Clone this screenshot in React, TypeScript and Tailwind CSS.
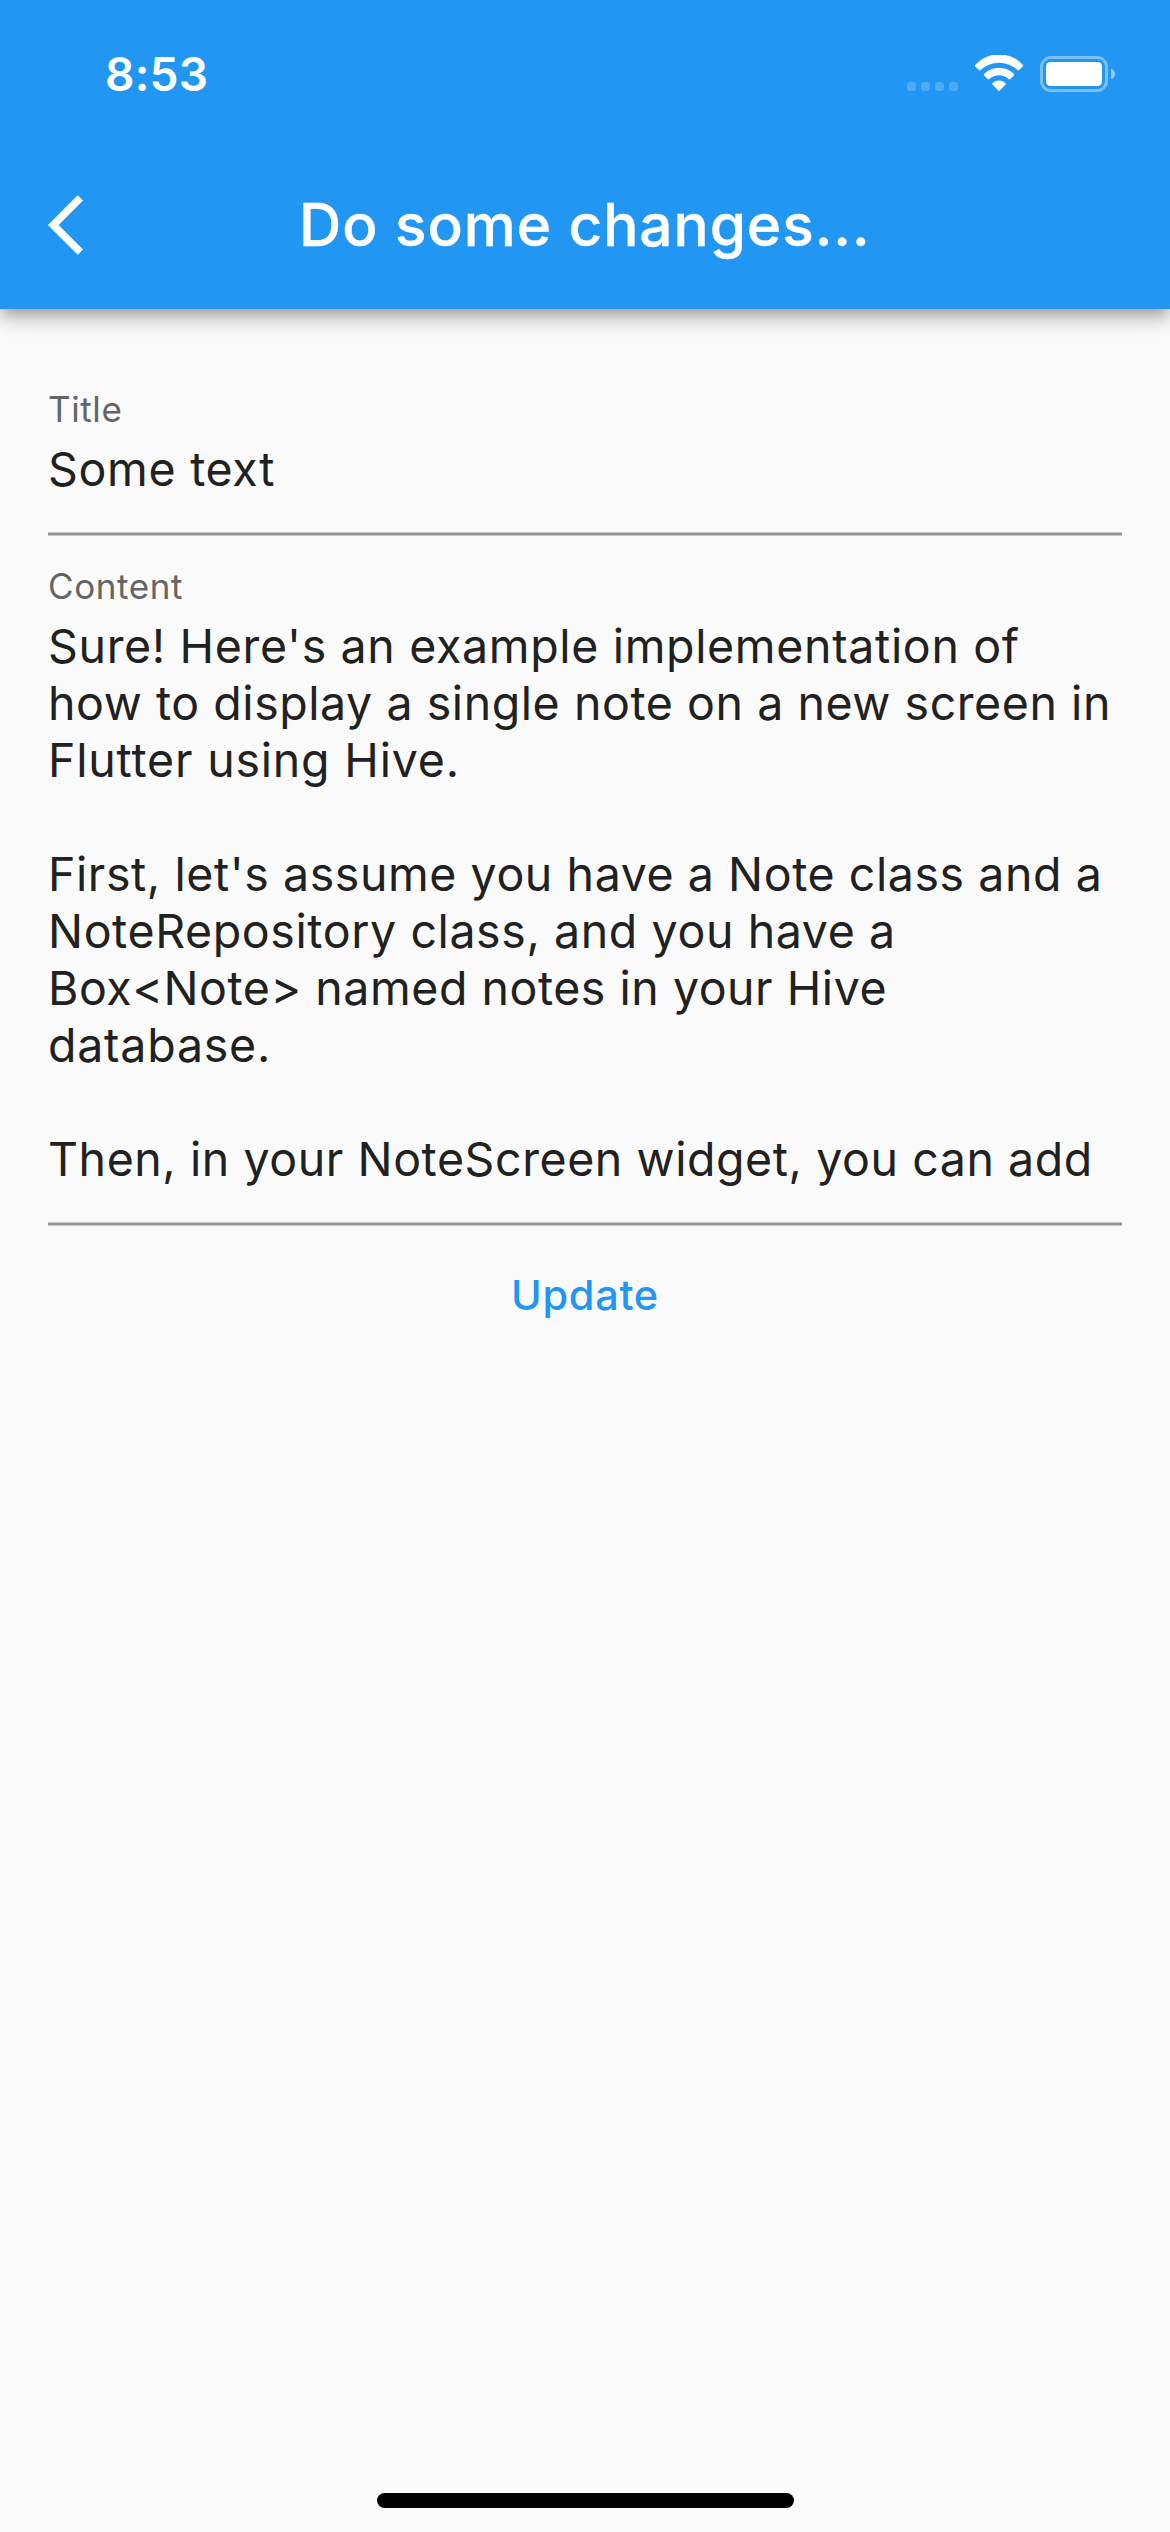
import type { ReactNode } from "react";

function WifiIcon() {
  return (
    <svg className="h-[38px] w-[49px]" viewBox="0 0 49 38" fill="white">
      <path d="M0.300 9.700A32.500 32.500 0 0 1 47.700 9.700Q48.600 10.500 47.800 11.400L44.200 15Q43.500 15.800 42.600 15A27.500 27.500 0 0 0 5.400 15Q4.500 15.800 3.800 15L0.200 11.400Q-0.600 10.500 0.300 9.700Z" />
      <path d="M9.200 18.800A21 21 0 0 1 38.800 18.800Q39.700 19.600 38.900 20.400L35.300 24Q34.500 24.800 33.600 24A14.500 14.500 0 0 0 14.400 24Q13.500 24.800 12.700 24L9.100 20.400Q8.300 19.600 9.200 18.800Z" />
      <path d="M17.600 28A9.500 9.500 0 0 1 30.400 28Q31.300 28.800 30.500 29.600L24.800 35.600Q24 36.500 23.200 35.600L17.500 29.600Q16.700 28.800 17.600 28Z" />
    </svg>
  );
}

function BatteryIcon() {
  return (
    <svg className="h-[38px] w-[76px]" viewBox="0 0 76 38">
      <rect x="1.500" y="2.500" width="65" height="33" rx="9.500" fill="none" stroke="white" strokeOpacity="0.4" strokeWidth="3" />
      <rect x="6" y="7" width="56" height="24" rx="4.500" fill="white" />
      <path d="M71 13.500C73.500 14.500 75 16.500 75 19S73.500 23.500 71 24.500Z" fill="white" fillOpacity="0.5" />
    </svg>
  );
}

function StatusBar() {
  return (
    <div className="flex h-[141px] items-start justify-between pr-[54px] pl-[105px]">
      <span className="mt-[46px] text-[46px] leading-[56px] font-semibold tracking-[0.22px]">8:53</span>
      <div className="mt-[55px] flex">
        <div className="mt-[27px] mr-[17px] flex gap-[5px]">
          {[0, 1, 2, 3].map((i) => (
            <span key={i} className="size-[9px] rounded-[3px] bg-white/20" />
          ))}
        </div>
        <WifiIcon />
        <div className="ml-4">
          <BatteryIcon />
        </div>
      </div>
    </div>
  );
}

function AppBar() {
  return (
    <div className="grid h-[168px] grid-cols-[299px_1fr] items-center">
      <button aria-label="Back" className="pl-12">
        <svg className="h-[60px] w-[36px]" viewBox="0 2 12 20" fill="white">
          <path d="M11.670 3.870L9.900 2.100 0 12l9.900 9.900 1.770-1.770L3.540 12z" />
        </svg>
      </button>
      <h1 className="text-[58.5px] leading-[72px] font-medium tracking-[0.95px] whitespace-nowrap [-webkit-text-stroke:0.4px_white]">
        Do some changes...
      </h1>
    </div>
  );
}

function Field({ label, children }: { label: string; children: ReactNode }) {
  return (
    <div>
      <label className="block text-[35px] leading-[42px] tracking-[0.6px] text-[#656565]">{label}</label>
      <div className="mt-[11px] pb-[34px] text-[46.5px] leading-[57px] whitespace-pre text-[#212121]">{children}</div>
      <div className="h-1 border-y border-[#c6c6c6] bg-[#949494]" />
    </div>
  );
}

const lines: [string, string][] = [
  ["Sure! Here's an example implementation of", "tracking-[0.66px]"],
  ["how to display a single note on a new screen in", "tracking-[0.56px]"],
  ["Flutter using Hive.", "tracking-[0.8px]"],
  ["", ""],
  ["First, let's assume you have a Note class and a", "tracking-[0.57px]"],
  ["NoteRepository class, and you have a", "tracking-[0.6px]"],
  ["Box<Note> named notes in your Hive", "tracking-[0.53px]"],
  ["database.", "tracking-[0.77px]"],
  ["", ""],
  ["Then, in your NoteScreen widget, you can add", "tracking-[0.57px]"],
];

export default function App() {
  return (
    <div className="flex h-[2532px] w-[1170px] flex-col overflow-hidden bg-[#fafafa] font-['Inter',sans-serif]">
      <header className="h-[309px] shrink-0 bg-[#2196f3] text-white shadow-[0_6px_12px_-3px_rgba(0,0,0,0.2),0_12px_15px_0_rgba(0,0,0,0.14),0_3px_30px_0_rgba(0,0,0,0.12)]">
        <StatusBar />
        <AppBar />
      </header>
      <main className="flex flex-1 flex-col px-12 pt-[79px]">
        <Field label="Title">
          <p className="tracking-[0.7px]">Some text</p>
        </Field>
        <div className="h-[29px]" />
        <Field label="Content">
          {lines.map(([text, tracking], i) => (
            <p key={i} className={`h-[57px] ${tracking}`}>
              {text}
            </p>
          ))}
        </Field>
        <button className="mt-11 self-center text-[41.5px] leading-[50px] font-medium tracking-[0.68px] text-[#2196f3]">
          Update
        </button>
      </main>
      <div className="mb-6 h-[15px] w-[417px] shrink-0 self-center rounded-full bg-black" />
    </div>
  );
}
